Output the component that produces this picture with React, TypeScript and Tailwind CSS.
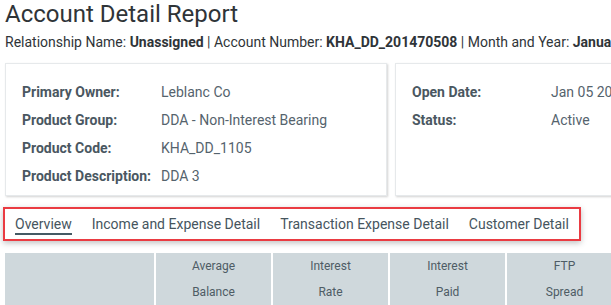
import React from "react";

const rowsLeft = [
  ["Primary Owner:", "Leblanc Co"],
  ["Product Group:", "DDA - Non-Interest Bearing"],
  ["Product Code:", "KHA_DD_1105"],
  ["Product Description:", "DDA 3"],
];
const rowsRight = [
  ["Open Date:", "Jan 05 2015"],
  ["Status:", "Active"],
];

function Card({ rows, width }: { rows: string[][]; width: string }) {
  return (
    <div
      className={`${width} shrink-0 h-[133px] bg-white border border-[#e6e9eb] shadow-[1px_1px_2px_rgba(0,0,0,0.18)] pt-[14px] pl-[16px]`}
    >
      {rows.map(([l, v]) => (
        <div key={l} className="flex h-[28px] items-center text-[14px] whitespace-nowrap">
          <div className="w-[139px] shrink-0 font-bold text-[#4a5761]">{l}</div>
          <div className="text-[#55636d]">{v}</div>
        </div>
      ))}
    </div>
  );
}

export default function App() {
  const cols = [
    ["Average", "Balance"],
    ["Interest", "Rate"],
    ["Interest", "Paid"],
    ["FTP", "Spread"],
  ];
  return (
    <div
      className="w-[611px] h-[305px] overflow-hidden bg-white"
      style={{ fontFamily: "Roboto, 'Liberation Sans', sans-serif" }}
    >
      <div className="w-[800px] pl-[5px]">
        <div className="text-[24px] leading-[28px] text-[#2f3438]">Account Detail Report</div>
        <div className="mt-[6px] text-[14px] leading-[16px] text-[#2f3438] whitespace-nowrap">
          Relationship Name: <b>Unassigned</b> | Account Number: <b>KHA_DD_201470508</b> | Month and Year:{" "}
          <b>January 2015</b>
        </div>
        <div className="flex gap-[8px] mt-[13px]">
          <Card rows={rowsLeft} width="w-[382px]" />
          <Card rows={rowsRight} width="w-[382px]" />
        </div>
        <div className="ml-[-2px] mt-[11px] w-[578px] h-[34px] border-2 border-[#ea3b42] bg-white shadow-[0_2px_6px_rgba(0,0,0,0.25)] flex items-center gap-[20px] pl-[10px] text-[14px] text-[#46555e] whitespace-nowrap">
          <div className="relative">
            Overview
            <div className="absolute left-0 right-0 top-[19px] h-[2px] bg-[#455a64]" />
          </div>
          <div>Income and Expense Detail</div>
          <div>Transaction Expense Detail</div>
          <div>Customer Detail</div>
        </div>
        <div className="flex gap-[2px] mt-[12px]">
          <div className="w-[149px] h-[60px] bg-[#cfd8dc]" />
          {cols.map(([a, b], i) => (
            <div
              key={i}
              className="w-[115px] h-[60px] bg-[#cfd8dc] flex flex-col items-center text-[12px] text-[#4e5c65] pt-[6px]"
            >
              <div className="leading-[14px]">{a}</div>
              <div className="leading-[14px] mt-[12px]">{b}</div>
            </div>
          ))}
        </div>
      </div>
    </div>
  );
}
